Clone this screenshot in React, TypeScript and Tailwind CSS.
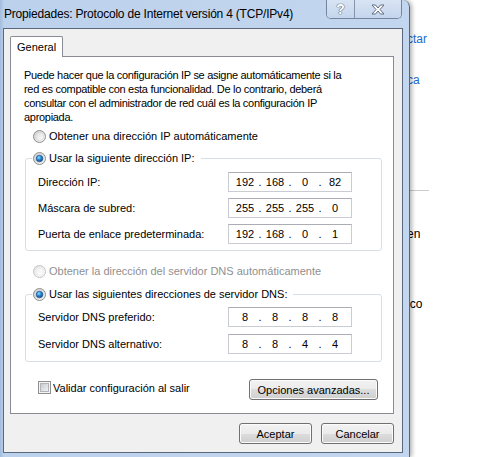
import React from 'react';

const ipBoxes = {
  ip: ['192', '168', '0', '82'],
  mask: ['255', '255', '255', '0'],
  gateway: ['192', '168', '0', '1'],
  dns1: ['8', '8', '8', '8'],
  dns2: ['8', '8', '4', '4'],
};

function Radio({ checked, disabled }: { checked?: boolean; disabled?: boolean }) {
  const id = checked ? 'rc' : disabled ? 'rd' : 'ru';
  return (
    <svg width="13" height="13" viewBox="0 0 13 13" className="shrink-0">
      <defs>
        <linearGradient id={`${id}-ring`} x1="0" y1="0" x2="1" y2="1">
          <stop offset="0" stopColor={disabled ? '#e2e2e2' : '#c9cbcd'} />
          <stop offset="1" stopColor="#fbfbfb" />
        </linearGradient>
        <linearGradient id={`${id}-in`} x1="0" y1="0" x2="1" y2="1">
          <stop offset="0" stopColor={disabled ? '#eeeeee' : '#dcdcdc'} />
          <stop offset="1" stopColor="#ffffff" />
        </linearGradient>
        <radialGradient id={`${id}-dot`} cx="0.4" cy="0.35" r="0.7">
          <stop offset="0" stopColor="#8fdcff" />
          <stop offset="0.45" stopColor="#2e8fd8" />
          <stop offset="1" stopColor="#0d3f78" />
        </radialGradient>
      </defs>
      <circle cx="6.5" cy="6.5" r="6" fill={`url(#${id}-ring)`} stroke={disabled ? '#c4c4c4' : '#8e8f8f'} strokeWidth="1" />
      <circle cx="6.5" cy="6.5" r="4" fill={`url(#${id}-in)`} stroke={disabled ? '#e6e6e6' : '#d2d2d2'} strokeWidth="0.6" />
      {checked && <circle cx="6.5" cy="6.5" r="3.3" fill={`url(#${id}-dot)`} stroke="#1d4f8c" strokeWidth="0.6" />}
    </svg>
  );
}

function CheckBox() {
  return (
    <svg width="13" height="13" viewBox="0 0 13 13" className="shrink-0">
      <defs>
        <linearGradient id="cb-in" x1="0" y1="0" x2="1" y2="1">
          <stop offset="0" stopColor="#c4c8ce" />
          <stop offset="1" stopColor="#f4f4f4" />
        </linearGradient>
      </defs>
      <rect x="0.5" y="0.5" width="12" height="12" fill="#f4f4f4" stroke="#8e8f8f" />
      <rect x="2.5" y="2.5" width="8" height="8" fill="url(#cb-in)" stroke="#b1b5bb" />
    </svg>
  );
}

function WinButton({ label, className }: { label: string; className: string }) {
  return (
    <div
      className={`flex items-center justify-center rounded-[3px] border border-[#707070] bg-[linear-gradient(#f2f2f2_0%,#ebebeb_50%,#dddddd_50%,#cfcfcf_100%)] text-[11px] leading-[16px] text-black shadow-[inset_0_0_0_1px_#fbfbfb] ${className}`}
    >
      {label}
    </div>
  );
}

function IpBox({ parts }: { parts: string[] }) {
  return (
    <div className="flex h-[20px] w-[124px] items-center border border-[#c9cdd3] border-t-[#abadb3] bg-white pl-[4px]">
      {parts.map((p, i) => (
        <React.Fragment key={i}>
          {i > 0 && <span className="flex w-[6px] justify-center">.</span>}
          <span className="flex w-[24px] justify-center">{p}</span>
        </React.Fragment>
      ))}
    </div>
  );
}

function FieldRow({ label, parts }: { label: string; parts: string[] }) {
  return (
    <div className="flex h-[20px] items-center">
      <span className="w-[190px] whitespace-nowrap">{label}</span>
      <IpBox parts={parts} />
    </div>
  );
}

function RadioRow({ label, checked, disabled }: { label: string; checked?: boolean; disabled?: boolean }) {
  return (
    <div className={`flex h-[16px] items-center gap-[3px] whitespace-nowrap ${disabled ? 'text-[#8f8f8f]' : 'text-black'}`}>
      <Radio checked={checked} disabled={disabled} />
      <span>{label}</span>
    </div>
  );
}

export default function App() {
  return (
    <div className="flex h-[457px] w-[483px] overflow-hidden bg-white font-['Liberation_Sans',Arial,sans-serif] text-[12px] leading-[16px] text-black">
      {/* dialog window */}
      <div className="relative z-10 flex h-[457px] w-[410px] shrink-0 flex-col rounded-tr-[7px] border-r border-[#56657c] bg-[linear-gradient(90deg,#a3bcdd_0px,#bcd1ec_4px,#c3d6ef_100%)] shadow-[2px_0_4px_rgba(0,0,0,0.3)]">
        {/* title bar */}
        <div className="flex h-[28px] items-start">
          <div className="whitespace-nowrap pl-[4px] pt-[6px] tracking-[-0.2px]">Propiedades: Protocolo de Internet versión 4 (TCP/IPv4)</div>
          <div className="ml-auto mr-[7px] flex h-[19px] overflow-hidden rounded-b-[5px] border border-t-0 border-[#74849c] shadow-[inset_0_0_0_1px_rgba(255,255,255,0.55)]">
            <div className="flex w-[28px] items-center justify-center border-r border-[#8595ad] bg-[linear-gradient(#d8e4f3,#c4d5ec)] text-[14px] font-bold leading-[14px] text-white [text-shadow:0_0_1px_#56647a,0_0_1px_#56647a,0_0_1px_#56647a]">
              ?
            </div>
            <div className="flex w-[46px] items-center justify-center bg-[linear-gradient(#d8e4f3,#c4d5ec)]">
              <svg width="14" height="11" viewBox="0 0 14 11">
                <path
                  d="M1 1 H4.5 L7 4 L9.5 1 H13 L9 5.5 L13 10 H9.5 L7 7 L4.5 10 H1 L5 5.5 Z"
                  fill="#ffffff"
                  stroke="#5f6d84"
                  strokeWidth="1"
                  strokeLinejoin="round"
                />
              </svg>
            </div>
          </div>
        </div>

        {/* client area */}
        <div className="ml-[3px] flex h-[425px] w-[400px] flex-col border border-[#5a687e] bg-[#f0f0f0] pl-[6px] pt-[7px] text-[11px]">
          {/* tab header */}
          <div className="flex">
            <div className="relative z-10 -mb-px h-[21px] w-[53px] rounded-t-[2px] border border-b-0 border-[#898c95] bg-white pl-[6px] pt-[2px]">
              General
            </div>
          </div>

          {/* tab panel */}
          <div className="flex h-[358px] w-[384px] flex-col border border-[#898c95] bg-white pl-[14px] pr-[11px] pt-[11px]">
            <div className="-ml-px leading-[14px] tracking-[-0.3px]">
              <div className="whitespace-nowrap">Puede hacer que la configuración IP se asigne automáticamente si la</div>
              <div className="whitespace-nowrap">red es compatible con esta funcionalidad. De lo contrario, deberá</div>
              <div className="whitespace-nowrap">consultar con el administrador de red cuál es la configuración IP</div>
              <div className="whitespace-nowrap">apropiada.</div>
            </div>

            <div className="ml-[8px] mt-[4px]">
              <RadioRow label="Obtener una dirección IP automáticamente" />
            </div>

            <fieldset className="mt-[6px] rounded-[3px] border border-[#d5dfe5] px-[12px] pb-[6px]">
              <legend className="-ml-[6px] pl-[1px] pr-[6px]">
                <RadioRow label="Usar la siguiente dirección IP:" checked />
              </legend>
              <div className="mt-[6px] flex flex-col gap-[6px]">
                <FieldRow label="Dirección IP:" parts={ipBoxes.ip} />
                <FieldRow label="Máscara de subred:" parts={ipBoxes.mask} />
                <FieldRow label="Puerta de enlace predeterminada:" parts={ipBoxes.gateway} />
              </div>
            </fieldset>

            <div className="ml-[8px] mt-[12px]">
              <RadioRow label="Obtener la dirección del servidor DNS automáticamente" disabled />
            </div>

            <fieldset className="mt-[7px] rounded-[3px] border border-[#d5dfe5] px-[12px] pb-[7px]">
              <legend className="-ml-[6px] pl-[1px] pr-[6px]">
                <RadioRow label="Usar las siguientes direcciones de servidor DNS:" checked />
              </legend>
              <div className="mt-[5px] flex flex-col gap-[7px]">
                <FieldRow label="Servidor DNS preferido:" parts={ipBoxes.dns1} />
                <FieldRow label="Servidor DNS alternativo:" parts={ipBoxes.dns2} />
              </div>
            </fieldset>

            <div className="mt-[17px] flex items-start">
              <div className="ml-[13px] mt-[2px] flex h-[13px] items-center gap-[2px] whitespace-nowrap">
                <CheckBox />
                <span>Validar configuración al salir</span>
              </div>
              <WinButton label="Opciones avanzadas..." className="ml-auto mr-[4px] h-[21px] w-[129px]" />
            </div>
          </div>

          {/* dialog buttons */}
          <div className="mt-[9px] flex w-[384px] justify-end gap-[9px]">
            <WinButton label="Aceptar" className="h-[21px] w-[73px]" />
            <WinButton label="Cancelar" className="h-[21px] w-[73px]" />
          </div>
        </div>
      </div>

      {/* window behind the dialog */}
      <div className="-ml-[3px] flex flex-1 flex-col pt-[31px]">
        <div className="text-[#1c6bd0]">ctar</div>
        <div className="mt-[25px] text-[#1c6bd0]">ca</div>
        <div className="mt-[102px] h-px w-[22px] bg-[#cccccc]" />
        <div className="mt-[35px]">en</div>
        <div className="mt-[54px]">ico</div>
      </div>
    </div>
  );
}
